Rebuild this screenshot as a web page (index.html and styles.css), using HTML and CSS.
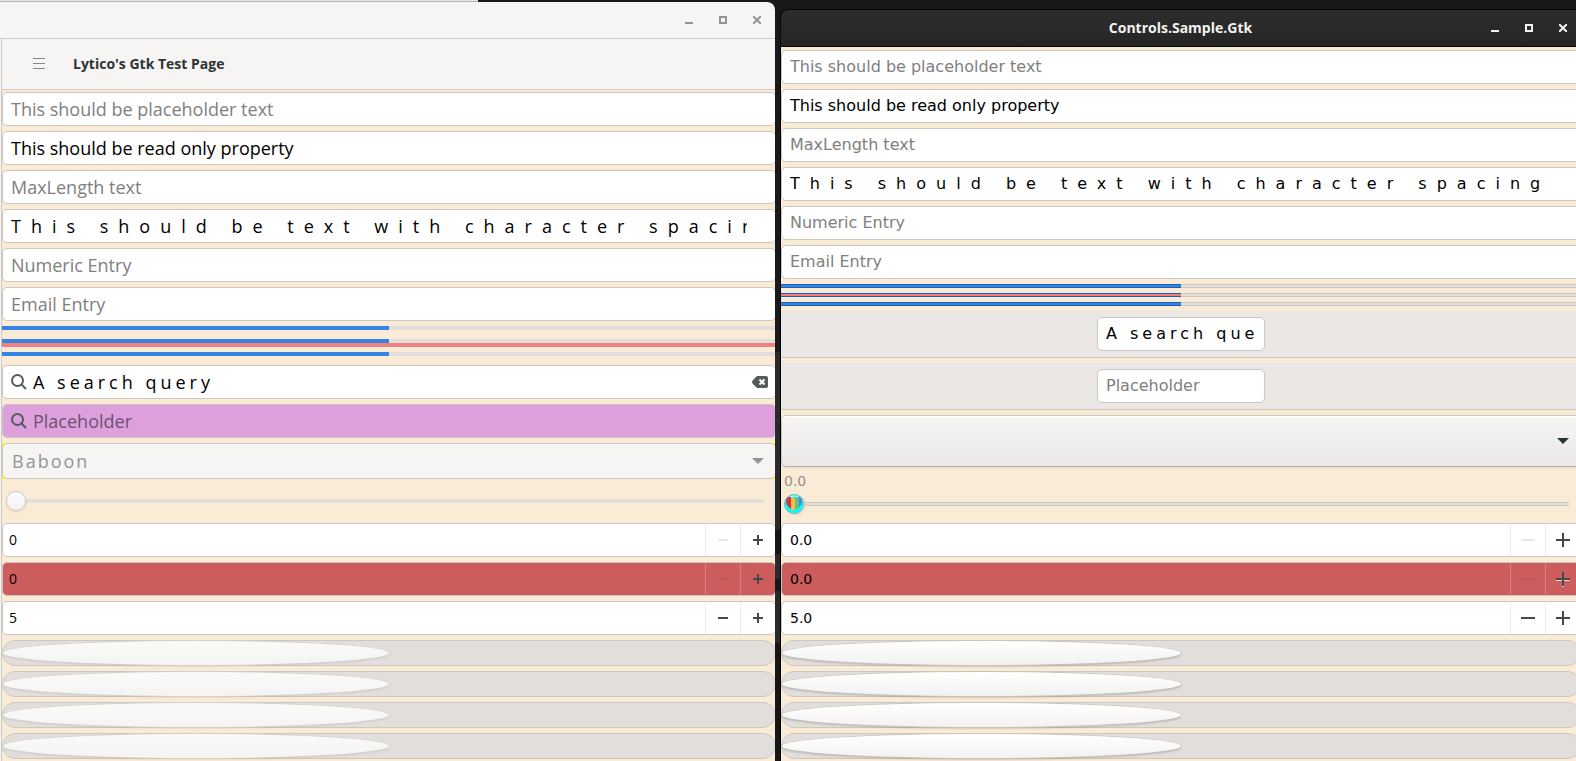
FILE: index.html
```
<!DOCTYPE html>
<html lang="en">
<head>
  <meta charset="UTF-8" />
  <meta name="viewport" content="width=device-width, initial-scale=1.0"/>
  <title>Controls.Sample.Gtk</title>
  <link rel="stylesheet" href="styles.css">
</head>
<body>
  <div class="desktop">
    <section class="window light">
      <div class="titlebar">
        <button class="win-btn" aria-label="Minimize"><svg width="8" height="8"><path d="M0 6h8v2H0z"/></svg></button>
        <button class="win-btn" aria-label="Maximize"><svg width="8" height="8"><path d="M0 0h8v8H0zM2 2v4h4V2z" fill-rule="evenodd"/></svg></button>
        <button class="win-btn" aria-label="Close"><svg width="8" height="8"><path d="M0 0l8 8M8 0L0 8" stroke="currentColor" stroke-width="2"/></svg></button>
      </div>
      <div class="page">
        <header class="page-header">
          <button class="menu-btn" aria-label="Menu"><svg width="12" height="12"><path d="M0 0h12v1H0zM0 5h12v1H0zM0 10h12v1H0z" fill="#858989"/></svg></button>
          <h1>Lytico's Gtk Test Page</h1>
        </header>
        <div class="controls">
          <input class="entry" type="text" aria-label="Placeholder entry" placeholder="This should be placeholder text">
          <input class="entry" type="text" aria-label="Read only entry" value="This should be read only property" readonly>
          <input class="entry" type="text" aria-label="MaxLength entry" placeholder="MaxLength text" maxlength="10">
          <input class="entry spaced" type="text" aria-label="Spaced entry" value="This should be text with character spacing">
          <input class="entry" type="text" aria-label="Numeric entry" placeholder="Numeric Entry" inputmode="numeric">
          <input class="entry" type="email" aria-label="Email entry" placeholder="Email Entry">
          <div class="bars">
            <progress value="50" max="100" aria-label="Progress 1"></progress>
            <progress class="coral" value="50" max="100" aria-label="Progress 2"></progress>
            <progress value="50" max="100" aria-label="Progress 3"></progress>
          </div>
          <div class="search">
            <svg class="glass" width="16" height="16" viewBox="0 0 16 16"><circle cx="6.500" cy="6.500" r="5.500"/><path d="M10.500 10.500l4.500 4.500"/></svg>
            <input class="query" type="text" aria-label="Search" value="A search query">
            <button class="clear-btn" aria-label="Clear"><svg width="16" height="12" viewBox="0 0 16 12"><path d="M5 0h9q2 0 2 2v8q0 2-2 2H5L1 8Q-1 6 1 4z" fill="#555c5c"/><path d="M7.500 3.500l5 5M12.500 3.500l-5 5" stroke="#fff" stroke-width="2"/></svg></button>
          </div>
          <div class="search plum">
            <svg class="glass" width="16" height="16" viewBox="0 0 16 16"><circle cx="6.500" cy="6.500" r="5.500"/><path d="M10.500 10.500l4.500 4.500"/></svg>
            <input type="text" aria-label="Search placeholder" placeholder="Placeholder">
          </div>
          <div class="combo">
            <select aria-label="Picker" disabled><option>Baboon</option></select>
            <svg width="12" height="6"><path d="M0 0h12L6 6z"/></svg>
          </div>
          <div class="slider"><input type="range" aria-label="Slider" min="0" max="100" value="0"></div>
          <div class="stepper">
            <input type="number" aria-label="Stepper 1" value="0">
            <button aria-label="Decrease" disabled><svg width="10" height="10"><path d="M0 4h10v2H0z"/></svg></button>
            <button aria-label="Increase"><svg width="10" height="10"><path d="M0 4h10v2H0zM4 0h2v10H4z"/></svg></button>
          </div>
          <div class="stepper red">
            <input type="number" aria-label="Stepper 2" value="0">
            <button aria-label="Decrease" disabled><svg width="10" height="10"><path d="M0 4h10v2H0z"/></svg></button>
            <button aria-label="Increase"><svg width="10" height="10"><path d="M0 4h10v2H0zM4 0h2v10H4z"/></svg></button>
          </div>
          <div class="stepper">
            <input type="number" aria-label="Stepper 3" value="5">
            <button aria-label="Decrease"><svg width="10" height="10"><path d="M0 4h10v2H0z"/></svg></button>
            <button aria-label="Increase"><svg width="10" height="10"><path d="M0 4h10v2H0zM4 0h2v10H4z"/></svg></button>
          </div>
          <input class="switch" type="checkbox" aria-label="Switch 1">
          <input class="switch" type="checkbox" aria-label="Switch 2">
          <input class="switch" type="checkbox" aria-label="Switch 3">
          <input class="switch" type="checkbox" aria-label="Switch 4">
        </div>
      </div>
    </section>

    <section class="window dark">
      <div class="titlebar">
        <h2>Controls.Sample.Gtk</h2>
        <button class="win-btn" aria-label="Minimize"><svg width="8" height="8"><path d="M0 6h8v2H0z"/></svg></button>
        <button class="win-btn" aria-label="Maximize"><svg width="8" height="8"><path d="M0 0h8v8H0zM2 2v4h4V2z" fill-rule="evenodd"/></svg></button>
        <button class="win-btn" aria-label="Close"><svg width="8" height="8"><path d="M0 0l8 8M8 0L0 8" stroke="currentColor" stroke-width="2"/></svg></button>
      </div>
      <div class="page">
        <div class="controls">
          <input class="entry" type="text" aria-label="Placeholder entry" placeholder="This should be placeholder text">
          <input class="entry" type="text" aria-label="Read only entry" value="This should be read only property" readonly>
          <input class="entry" type="text" aria-label="MaxLength entry" placeholder="MaxLength text" maxlength="10">
          <input class="entry spaced" type="text" aria-label="Spaced entry" value="This should be text with character spacing">
          <input class="entry" type="text" aria-label="Numeric entry" placeholder="Numeric Entry" inputmode="numeric">
          <input class="entry" type="email" aria-label="Email entry" placeholder="Email Entry">
          <div class="bars">
            <progress value="50" max="100" aria-label="Progress 1"></progress>
            <progress class="coral" value="50" max="100" aria-label="Progress 2"></progress>
            <progress value="50" max="100" aria-label="Progress 3"></progress>
          </div>
          <div class="searchbar"><input class="entry query" type="text" aria-label="Search" value="A search query"></div>
          <div class="searchbar"><input class="entry" type="text" aria-label="Search placeholder" placeholder="Placeholder"></div>
          <div class="combo">
            <select aria-label="Picker"><option></option></select>
            <svg width="12" height="6"><path d="M0 0h12L6 6z"/></svg>
          </div>
          <div class="slider">
            <label for="scale">0.0</label>
            <input id="scale" type="range" min="0" max="100" value="0">
            <svg class="heart" width="20" height="20" viewBox="0 0 20 20">
              <circle cx="10" cy="10" r="9.500" fill="#0ff" stroke="#8fb5b0"/>
              <path d="M4 4q6-4 12 0" fill="none" stroke="#d8ffff"/>
              <clipPath id="heart"><path d="M10 16.500C4 14 2 10 2 7c0-4 5-6 8-2 3-4 8-2 8 2 0 3-2 7-8 9.500z"/></clipPath>
              <g clip-path="url(#heart)">
                <path d="M1 2h6v15H1z" fill="#cf3650"/>
                <path d="M7 2h4v15H7z" fill="#fcc02e"/>
                <path d="M11 2h4v15h-4z" fill="#62c08c"/>
                <path d="M15 2h4v15h-4z" fill="#3a8fe0"/>
              </g>
            </svg>
          </div>
          <div class="stepper">
            <input type="number" aria-label="Stepper 1" value="0.0" step="0.1">
            <button aria-label="Decrease" disabled><svg width="14" height="14"><path d="M0 6h14v2H0z"/></svg></button>
            <button aria-label="Increase"><svg width="14" height="14"><path d="M0 6h14v2H0zM6 0h2v14H6z"/></svg></button>
          </div>
          <div class="stepper red">
            <input type="number" aria-label="Stepper 2" value="0.0" step="0.1">
            <button aria-label="Decrease" disabled><svg width="14" height="14"><path d="M0 6h14v2H0z"/></svg></button>
            <button class="etched" aria-label="Increase"><svg width="14" height="14"><path d="M0 6h14v2H0zM6 0h2v14H6z"/></svg></button>
          </div>
          <div class="stepper">
            <input type="number" aria-label="Stepper 3" value="5.0" step="0.1">
            <button aria-label="Decrease"><svg width="14" height="14"><path d="M0 6h14v2H0z"/></svg></button>
            <button aria-label="Increase"><svg width="14" height="14"><path d="M0 6h14v2H0zM6 0h2v14H6z"/></svg></button>
          </div>
          <input class="switch" type="checkbox" aria-label="Switch 1">
          <input class="switch" type="checkbox" aria-label="Switch 2">
          <input class="switch" type="checkbox" aria-label="Switch 3">
          <input class="switch" type="checkbox" aria-label="Switch 4">
        </div>
      </div>
    </section>
  </div>
</body>
</html>
```
FILE: styles.css
```
* {
  box-sizing: border-box;
}
html, body {
  margin: 0;
  padding: 0;
  height: 100%;
  overflow: hidden;
}
input, button, select {
  margin: 0;
  padding: 0;
  border: none;
  border-radius: 0;
  background: none;
  font: inherit;
  color: inherit;
  outline: none;
  min-width: 0;
  appearance: none;
}
input::-webkit-inner-spin-button {
  appearance: none;
  margin: 0;
}
button {
  display: flex;
  align-items: center;
  justify-content: center;
}
h1, h2 {
  margin: 0;
}
.desktop {
  display: grid;
  grid-template-columns: 775fr 801fr;
  min-height: 100%;
  background: linear-gradient(#191919 352px, #2a2a2a 352px, #2a2a2a 530px, #161616 530px, #161616 554px, #2a2a2a 554px, #2a2a2a 579px, #161616 579px, #161616 591px, #2a2a2a 591px, #2a2a2a 643px, #161616 643px);
}
.window {
  display: flex;
  flex-direction: column;
  min-width: 0;
  overflow: hidden;
}
.light {
  padding-top: 2px;
  background: linear-gradient(#e4e4e2 1px, #b5b5b3 1px, #b5b5b3 2px, transparent 2px) no-repeat 0 0 / 478px 2px;
  font-family: "Open Sans", "Noto Sans", sans-serif;
}
.dark {
  margin-left: 5px;
  padding-top: 9px;
  font-family: "DejaVu Sans", sans-serif;
}
.titlebar {
  display: flex;
  align-items: center;
  justify-content: flex-end;
  height: 37px;
}
.light .titlebar {
  background: #f6f5f4;
  border-bottom: 1px solid #d0cdca;
  border-top-right-radius: 8px;
  color: #929595;
}
.dark .titlebar {
  height: 38px;
  border: 1px solid #060606;
  border-right: none;
  border-top-left-radius: 8px;
  background: linear-gradient(#2c2c2c, #262626);
  color: #f2f2f0;
}
.titlebar h2 {
  flex: 1;
  padding: 0 0 2px 102px;
  text-align: center;
  font: 700 14px "Open Sans", sans-serif;
}
.win-btn {
  width: 34px;
  height: 34px;
}
.win-btn svg {
  fill: currentColor;
}
.light .win-btn:last-child {
  margin-right: 1px;
}
.dark .win-btn:last-child {
  margin-right: -4px;
}
.page {
  flex: 1;
  background: #faebd7;
}
.light .page {
  margin-right: -1px;
  padding-left: 1px;
  border-left: 1px solid #f6f5f4;
  box-shadow: inset 1px 0 #cdc7c2;
}
.dark .page {
  border-left: 1px solid #000;
  margin-right: -5px;
}
.page-header {
  display: flex;
  align-items: center;
  gap: 28px;
  height: 51px;
  padding-left: 31px;
  background: #f6f5f4;
  border-bottom: 1px solid #d0cdca;
}
.page-header h1 {
  padding-bottom: 2px;
  font-size: 14px;
  font-weight: 700;
  color: #2e3436;
}
.controls {
  display: flex;
  flex-direction: column;
  gap: 5px;
}
.light .controls {
  padding-top: 2px;
}
.dark .controls {
  padding-top: 3px;
}
.entry, .search, .stepper {
  height: 34px;
  border: 1px solid #cdc7c2;
  border-radius: 5px;
  background: #fff;
  color: #000;
}
.entry {
  padding: 0 8px;
}
.light .entry {
  padding-right: 28px;
}
.light .entry, .search input {
  font-size: 18px;
}
.dark .entry {
  padding-bottom: 2px;
  font-size: 16px;
}
input::placeholder {
  color: #808080;
  opacity: 1;
}
.spaced {
  letter-spacing: 10px;
}
.query {
  letter-spacing: 4px;
}
.bars {
  display: flex;
  flex-direction: column;
}
.light .bars {
  gap: 9px;
  padding-bottom: 4px;
}
.dark .bars {
  gap: 5px;
}
progress {
  display: block;
  width: 100%;
  height: 4px;
  border: none;
  background: #e1dedb;
  appearance: none;
}
progress::-webkit-progress-bar {
  background: #e1dedb;
}
progress::-webkit-progress-value {
  background: #3584e4;
}
.light .coral {
  height: 8px;
  border-bottom: 4px solid #f08080;
}
.light .coral + progress {
  margin-top: -4px;
}
.dark progress::-webkit-progress-bar {
  background: linear-gradient(#cdc7c2 1px, #e1dedb 1px, #e1dedb 3px, #cdc7c2 3px);
}
.dark progress::-webkit-progress-value {
  background: linear-gradient(#1b5fb4 1px, #3584e4 1px, #3584e4 3px, #1b5fb4 3px);
}
.dark .coral::-webkit-progress-value {
  background: linear-gradient(#1b5fb4 1px, #f08080 1px, #f08080 3px, #1b5fb4 3px);
}
.search {
  display: flex;
  align-items: center;
  gap: 6px;
  padding: 0 7px 0 8px;
}
.search input {
  flex: 1;
}
.glass {
  fill: none;
  stroke: #555c5c;
  stroke-width: 2;
}
.plum {
  background: #dda0dd;
}
.plum input::placeholder {
  color: #6f506f;
}
.searchbar {
  display: flex;
  justify-content: center;
  height: 47px;
  padding-top: 6px;
  background: #ebe7e4;
  border-bottom: 1px solid #cdc7c2;
}
.searchbar .entry {
  width: 168px;
}
.combo {
  display: grid;
  align-items: center;
}
.combo > * {
  grid-area: 1 / 1;
}
.combo svg {
  justify-self: end;
}
.combo select {
  width: 100%;
  padding: 0 9px;
  border: 1px solid #cdc7c2;
  border-radius: 5px;
}
.light .combo {
  background: #ff0;
}
.light .combo select {
  height: 36px;
  background: #f6f5f4;
  color: #929595;
  font-size: 18px;
  letter-spacing: 2px;
  opacity: 1;
}
.light .combo svg {
  margin-right: 12px;
  fill: #929595;
}
.dark .combo select {
  height: 52px;
  border-bottom-color: #b6b0ab;
  background: linear-gradient(#f6f5f4, #eae9e8);
  box-shadow: inset 0 1px #fff, 0 1px 2px #00000012;
}
.dark .combo svg {
  margin-right: 12px;
  fill: #2e3436;
}
.slider {
  position: relative;
  display: flex;
  flex-direction: column;
}
.light .slider {
  height: 34px;
  padding: 7px 12px 0 4px;
}
.dark .slider {
  height: 46px;
  padding: 0 12px 0 3px;
}
.slider label {
  height: 22px;
  line-height: 18px;
  font-size: 14px;
  color: #929088;
}
.slider input {
  width: 100%;
  height: 20px;
}
.slider input::-webkit-slider-runnable-track {
  height: 4px;
  border-radius: 2px;
  background: #e1dedb;
}
.dark .slider input::-webkit-slider-runnable-track {
  border: 1px solid #cdc7c2;
}
.slider input::-webkit-slider-thumb {
  appearance: none;
  width: 20px;
  height: 20px;
  margin-top: -8px;
  border: 1px solid #d0cbc7;
  border-radius: 50%;
  background: linear-gradient(#fcfcfc, #f4f3f2);
  box-shadow: 0 1px 2px #00000020;
}
.dark .slider input::-webkit-slider-thumb {
  margin-top: -9px;
}
.heart {
  position: absolute;
  left: 3px;
  top: 22px;
  pointer-events: none;
}
.stepper {
  display: flex;
  overflow: hidden;
  font-size: 14px;
}
.stepper input {
  flex: 1;
  padding-left: 6px;
}
.light .stepper input {
  padding-bottom: 2px;
}
.dark .stepper input {
  padding-left: 8px;
}
.stepper button {
  width: 35px;
  border-left: 1px solid #ebebeb;
}
.stepper svg {
  fill: #43484a;
}
.stepper button:disabled svg {
  opacity: 0.12;
}
.red {
  background: #cd5c5c;
}
.red button {
  border-left-color: #d98080;
}
.etched svg {
  filter: drop-shadow(0 1px #ffffffc0);
}
.switch {
  height: 26px;
  border: 1px solid #cdc7c2;
  border-radius: 13px;
  background: #e1dedb;
}
.switch::before {
  content: "";
  display: block;
  width: 50%;
  height: 24px;
  border-radius: 50%;
  background: linear-gradient(#fafafa, #f5f4f3);
  box-shadow: 0 0 0 1px #d5d0cc, 0 2px 2px #00000010;
}
.dark .switch::before {
  background: linear-gradient(#fff, #f3f2f1);
  box-shadow: 0 0 0 1px #cbc4be, 0 2px 2px #00000028;
}
```
